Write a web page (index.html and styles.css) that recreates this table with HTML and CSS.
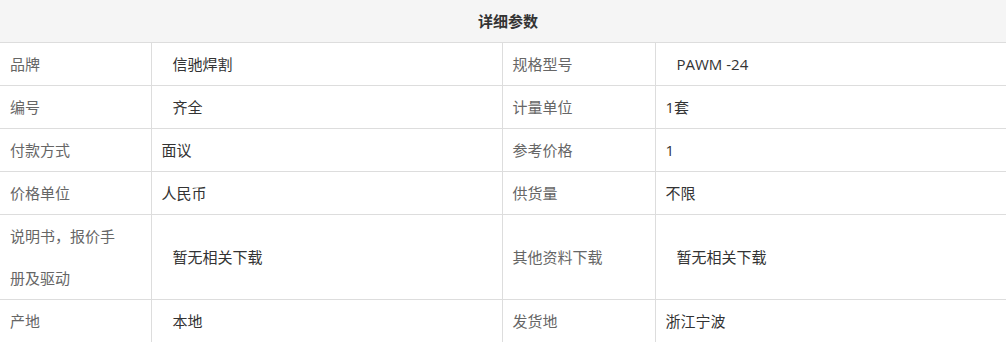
FILE: index.html
```html
<!DOCTYPE html>
<html lang="zh-CN">
<head>
<meta charset="utf-8">
<title>详细参数</title>
<link rel="stylesheet" href="styles.css">
</head>
<body>
<table class="params">
  <colgroup>
    <col class="c-label1">
    <col class="c-value1">
    <col class="c-label2">
    <col class="c-value2">
  </colgroup>
  <thead>
    <tr><th colspan="4" class="title">详细参数</th></tr>
  </thead>
  <tbody>
    <tr>
      <td class="label">品牌</td>
      <td class="value indent">信驰焊割</td>
      <td class="label">规格型号</td>
      <td class="value indent">PAWM -24</td>
    </tr>
    <tr>
      <td class="label">编号</td>
      <td class="value indent">齐全</td>
      <td class="label">计量单位</td>
      <td class="value">1套</td>
    </tr>
    <tr>
      <td class="label">付款方式</td>
      <td class="value">面议</td>
      <td class="label">参考价格</td>
      <td class="value">1</td>
    </tr>
    <tr>
      <td class="label">价格单位</td>
      <td class="value">人民币</td>
      <td class="label">供货量</td>
      <td class="value">不限</td>
    </tr>
    <tr>
      <td class="label">说明书，报价手<br>册及驱动</td>
      <td class="value indent">暂无相关下载</td>
      <td class="label">其他资料下载</td>
      <td class="value indent">暂无相关下载</td>
    </tr>
    <tr>
      <td class="label">产地</td>
      <td class="value indent">本地</td>
      <td class="label">发货地</td>
      <td class="value">浙江宁波</td>
    </tr>
  </tbody>
</table>
</body>
</html>
```
FILE: styles.css
```css
html, body {
  margin: 0;
  padding: 0;
  background: #fff;
}

body {
  font-family: "Open Sans", "Noto Sans CJK SC", "Noto Sans", sans-serif;
  font-size: 15px;
}

.params {
  width: 1006px;
  border-collapse: collapse;
  table-layout: fixed;
}

.c-label1 { width: 151px; }
.c-value1 { width: 351px; }
.c-label2 { width: 153px; }
.c-value2 { width: 351px; }

.params th,
.params td {
  border: 1px solid #dddddd;
  padding: 0 10px;
  line-height: 42px;
  text-align: left;
  vertical-align: middle;
}

.params tr > :first-child { border-left: none; }
.params tr > :last-child { border-right: none; }
.params thead th { border-top: none; }

.title {
  background: #f5f5f5;
  text-align: center !important;
  font-weight: bold;
  color: #333;
  height: 42px;
  padding: 0 0 0 10px !important;
}

.label {
  color: #666;
}

.value {
  color: #333;
}

.indent {
  padding-left: 21px !important;
}
```
